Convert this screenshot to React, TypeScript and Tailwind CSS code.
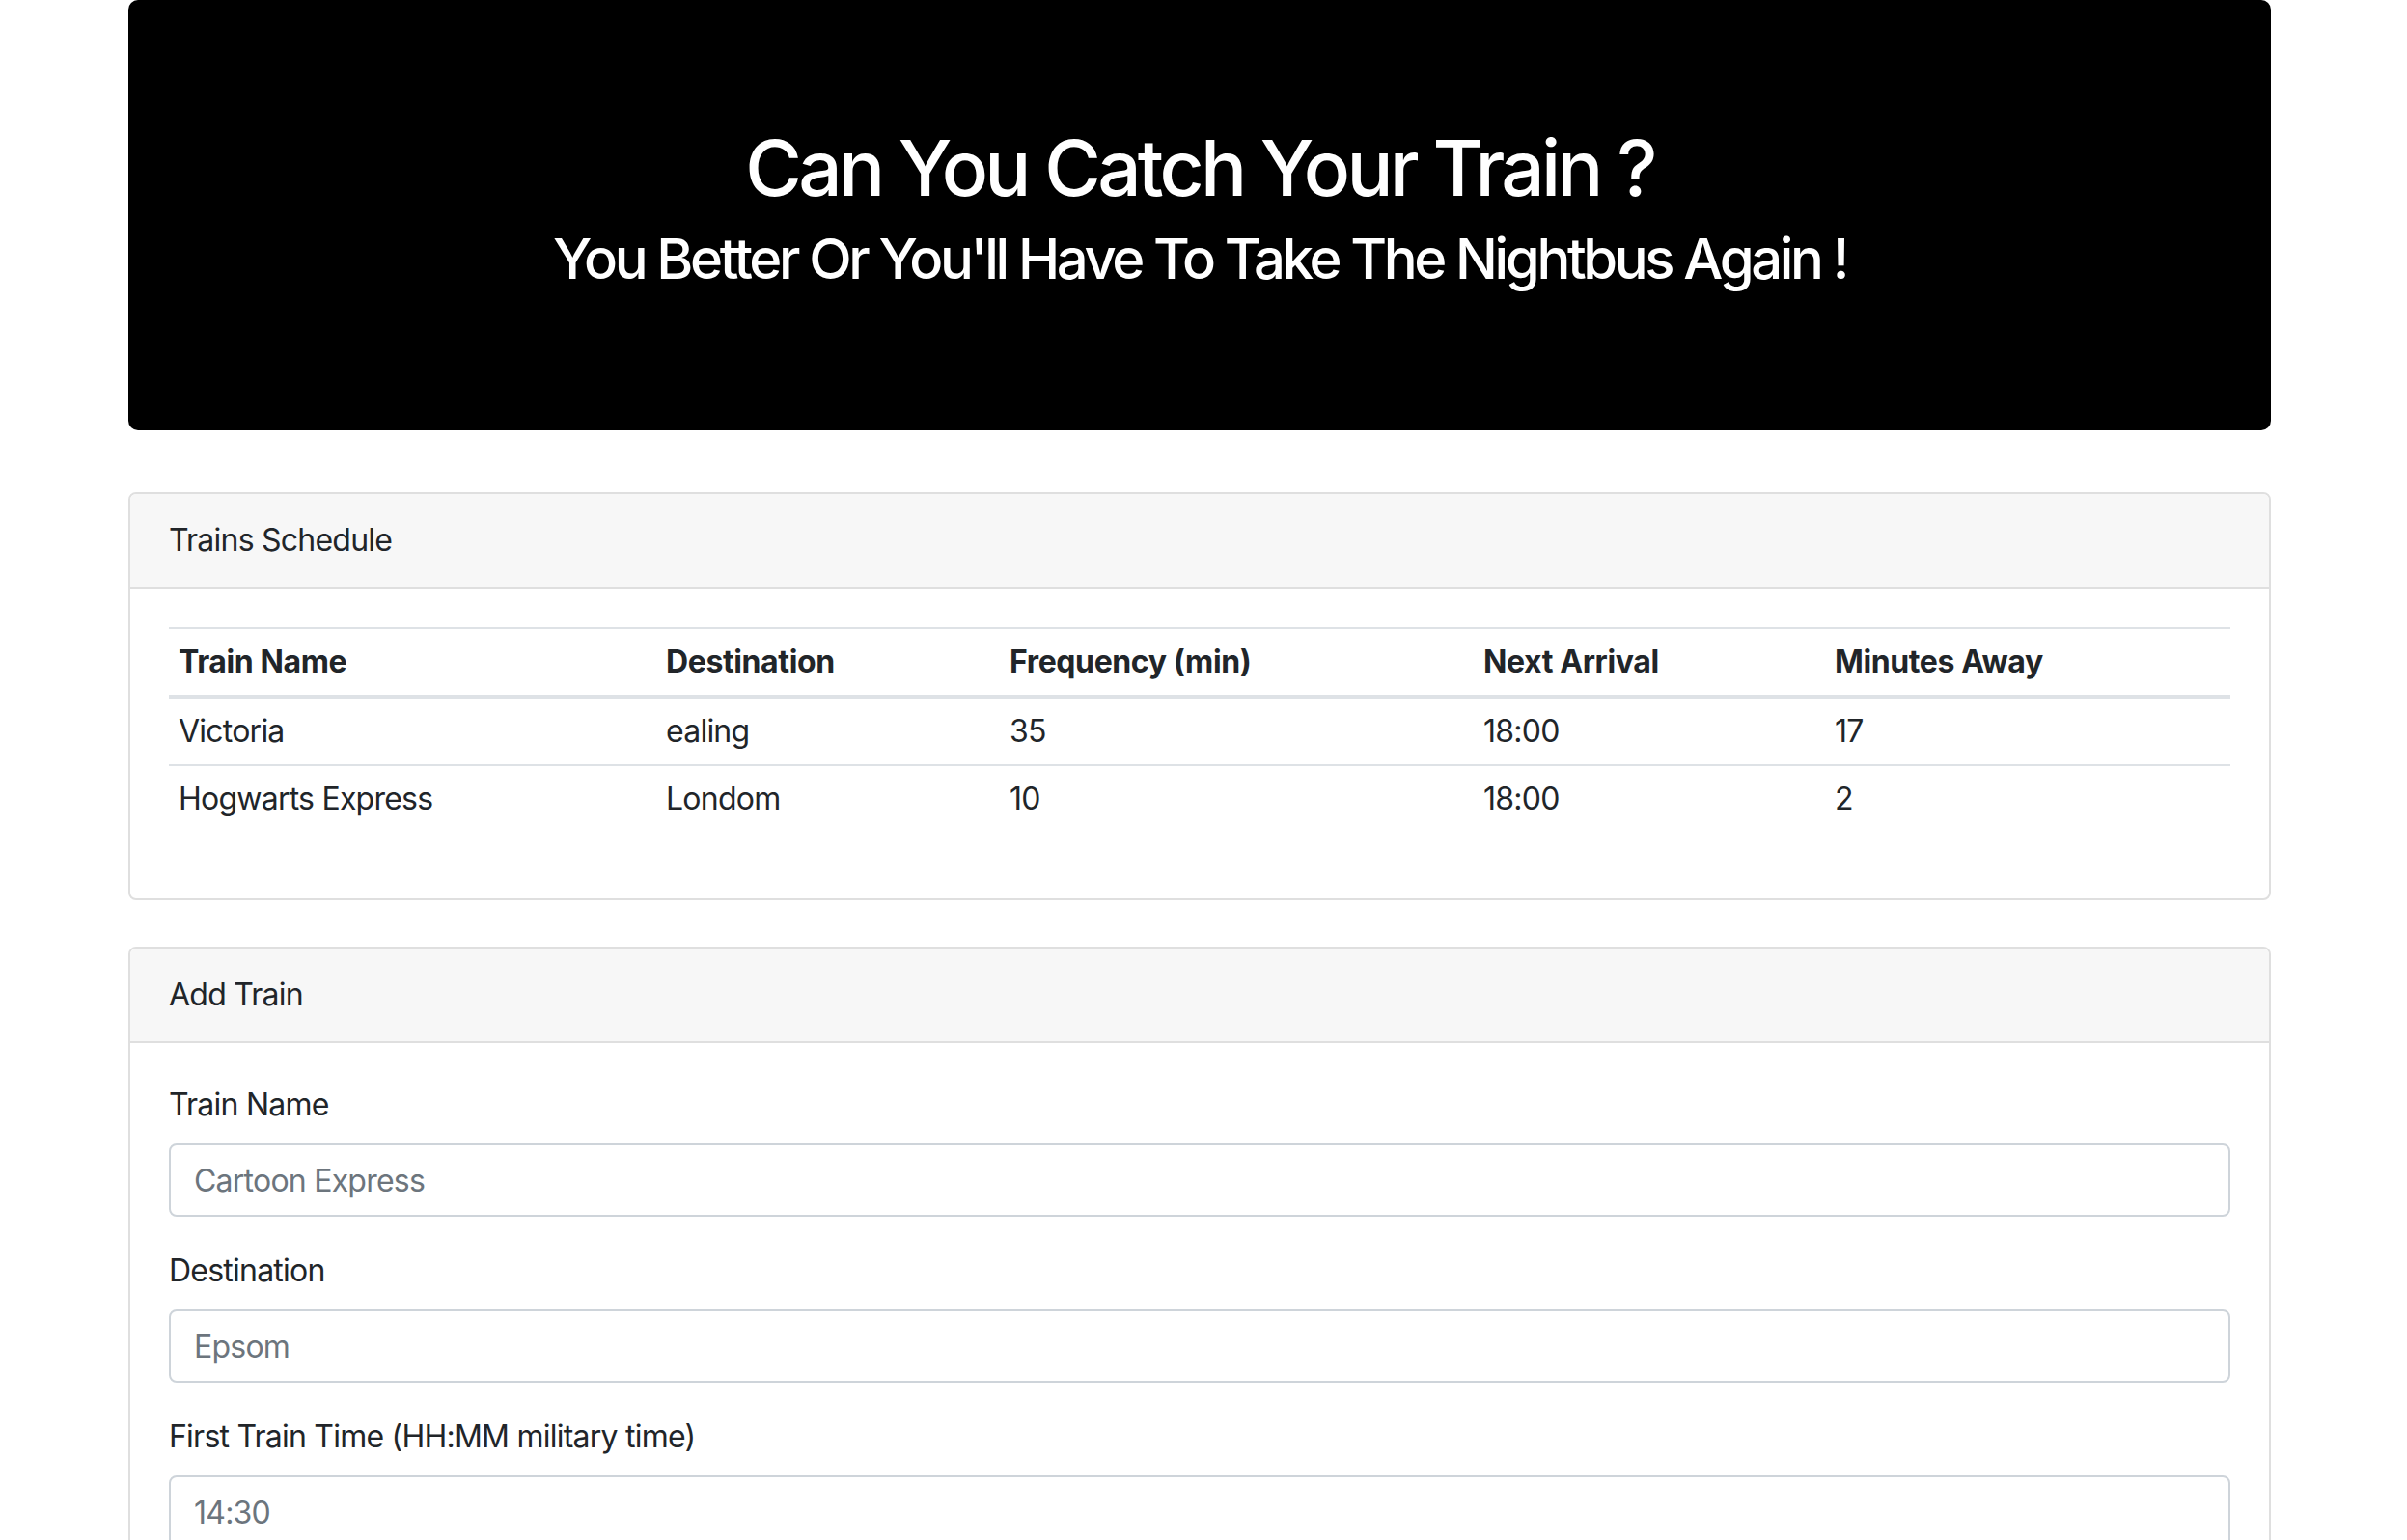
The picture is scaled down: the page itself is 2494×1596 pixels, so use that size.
import React from 'react';

// Schedule rows shown in the table
const TRAINS = [
  { name: 'Victoria', destination: 'ealing', frequency: '35', next: '18:00', away: '17' },
  { name: 'Hogwarts Express', destination: 'Londom', frequency: '10', next: '18:00', away: '2' },
];

const FIELDS = [
  { id: 'train-name', label: 'Train Name', placeholder: 'Cartoon Express' },
  { id: 'destination', label: 'Destination', placeholder: 'Epsom' },
  { id: 'first-train', label: 'First Train Time (HH:MM military time)', placeholder: '14:30' },
  { id: 'frequency', label: 'Frequency (min)', placeholder: '25' },
];

function CardHeader({ title }: { title: string }) {
  return (
    <div className="bg-[#f7f7f7] border-b-2 border-[#dfdfdf] px-[40px] py-[24px] text-[32px] leading-[48px] rounded-t-[6px]">
      {title}
    </div>
  );
}

function ScheduleTable() {
  const th = 'border-t-2 border-b-4 border-[#dee2e6] px-[10px] py-[10px] font-bold tracking-[-0.012em]';
  return (
    <table className="w-full table-fixed mb-[29px] text-left">
      <thead>
        <tr>
          <th className={`w-[505px] ${th}`}>Train Name</th>
          <th className={`w-[356px] ${th}`}>Destination</th>
          <th className={`w-[491px] ${th}`}>Frequency (min)</th>
          <th className={`w-[364px] ${th}`}>Next Arrival</th>
          <th className={th}>Minutes Away</th>
        </tr>
      </thead>
      <tbody>
        {TRAINS.map((train, index) => (
          <tr key={train.name} className={index > 0 ? 'border-t-2 border-[#dee2e6]' : ''}>
            <td className="px-[10px] py-[10px]">{train.name}</td>
            <td className="px-[10px] py-[10px]">{train.destination}</td>
            <td className="px-[10px] py-[10px]">{train.frequency}</td>
            <td className="px-[10px] py-[10px]">{train.next}</td>
            <td className="px-[10px] py-[10px]">{train.away}</td>
          </tr>
        ))}
      </tbody>
    </table>
  );
}

export default function App() {
  return (
    <div className="min-h-screen bg-white text-[#212529] text-[32px] leading-[48px] tracking-[-0.024em] font-['Inter','Liberation_Sans',sans-serif] pb-[80px]">
      <div className="w-[2220px] ml-[133px]">
        {/* Jumbotron */}
        <div className="bg-black text-white text-center rounded-[10px] pt-[126px] pb-[143px] mb-[64px]">
          <h1 className="text-[80px] leading-[96px] font-medium tracking-[-0.047em]">Can You Catch Your Train ?</h1>
          <h2 className="mt-[11px] text-[58px] leading-[70px] font-medium tracking-[-0.058em]">
            You Better Or You'll Have To Take The Nightbus Again !
          </h2>
        </div>

        {/* Schedule card */}
        <div className="border-2 border-[#dfdfdf] rounded-[8px] bg-white">
          <CardHeader title="Trains Schedule" />
          <div className="p-[40px]">
            <ScheduleTable />
          </div>
        </div>

        {/* Add train card */}
        <div className="mt-[48px] border-2 border-[#dfdfdf] rounded-[8px] bg-white">
          <CardHeader title="Add Train" />
          <form className="p-[40px]" onSubmit={e => e.preventDefault()}>
            {FIELDS.map(field => (
              <div key={field.id} className="mb-[32px]">
                <label htmlFor={field.id} className="block mb-[16px]">
                  {field.label}
                </label>
                <input
                  id={field.id}
                  type="text"
                  placeholder={field.placeholder}
                  className="block w-full h-[76px] border-2 border-[#ced4da] rounded-[8px] px-[24px] py-[12px] text-[32px] leading-[48px] tracking-[-0.024em] text-[#495057] placeholder:text-[#6c757d] outline-none"
                />
              </div>
            ))}
            <button
              type="submit"
              className="bg-[#007bff] text-white rounded-[8px] px-[24px] py-[12px] text-[32px] leading-[48px]"
            >
              Submit
            </button>
          </form>
        </div>
      </div>
    </div>
  );
}
